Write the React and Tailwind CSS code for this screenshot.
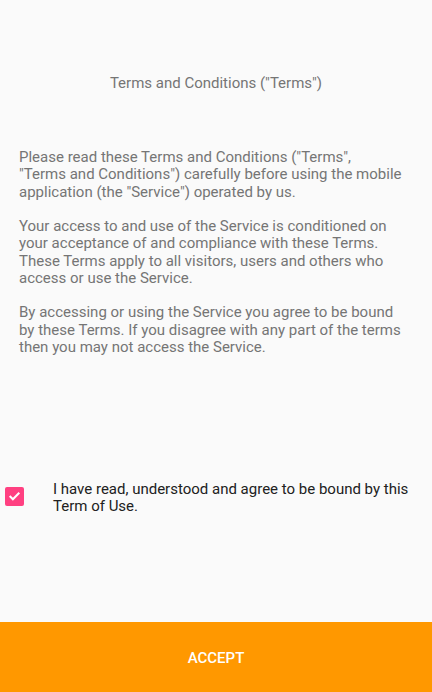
import React from "react";

export default function App() {
  return (
    <div className="w-[432px] h-[692px] bg-[#fafafa] flex flex-col font-['Roboto',sans-serif] overflow-hidden">
      <div className="flex-1 flex flex-col">
        <div className="pt-[74px] text-center text-[15px] leading-[18px] text-[#757575]">
          Terms and Conditions ("Terms")
        </div>
        <div className="mt-[57px] pl-[19px] pr-[26px] text-[15px] leading-[17.25px] text-[#757575]">
          <p>
            Please read these Terms and Conditions ("Terms",<br />
            "Terms and Conditions") carefully before using the mobile application (the "Service") operated by us.
          </p>
          <p className="mt-[17.25px]">
            Your access to and use of the Service is conditioned on your acceptance of and compliance with these Terms. These Terms apply to all visitors, users and others who access or use the Service.
          </p>
          <p className="mt-[17.25px]">
            By accessing or using the Service you agree to be bound by these Terms. If you disagree with any part of the terms then you may not access the Service.
          </p>
        </div>
        <div className="mt-[125px] flex items-start">
          <div className="w-[53px] shrink-0 flex pl-[5px] pt-[6px]">
            <div className="w-[19px] h-[19px] rounded-[2px] bg-[#ff4081] flex items-center justify-center">
              <svg width="13" height="13" viewBox="0 0 24 24" fill="none" stroke="white" strokeWidth="3.8" strokeLinecap="square">
                <path d="M4.5 12.5l4.5 4.5L19.5 6.5" />
              </svg>
            </div>
          </div>
          <div className="text-[15px] leading-[17.25px] text-[#212121] pr-[20px]">
            I have read, understood and agree to be bound by this Term of Use.
          </div>
        </div>
      </div>
      <div className="h-[70px] bg-[#ff9800] flex items-center justify-center pt-[2px] text-white text-[15px] font-medium">
        ACCEPT
      </div>
    </div>
  );
}
